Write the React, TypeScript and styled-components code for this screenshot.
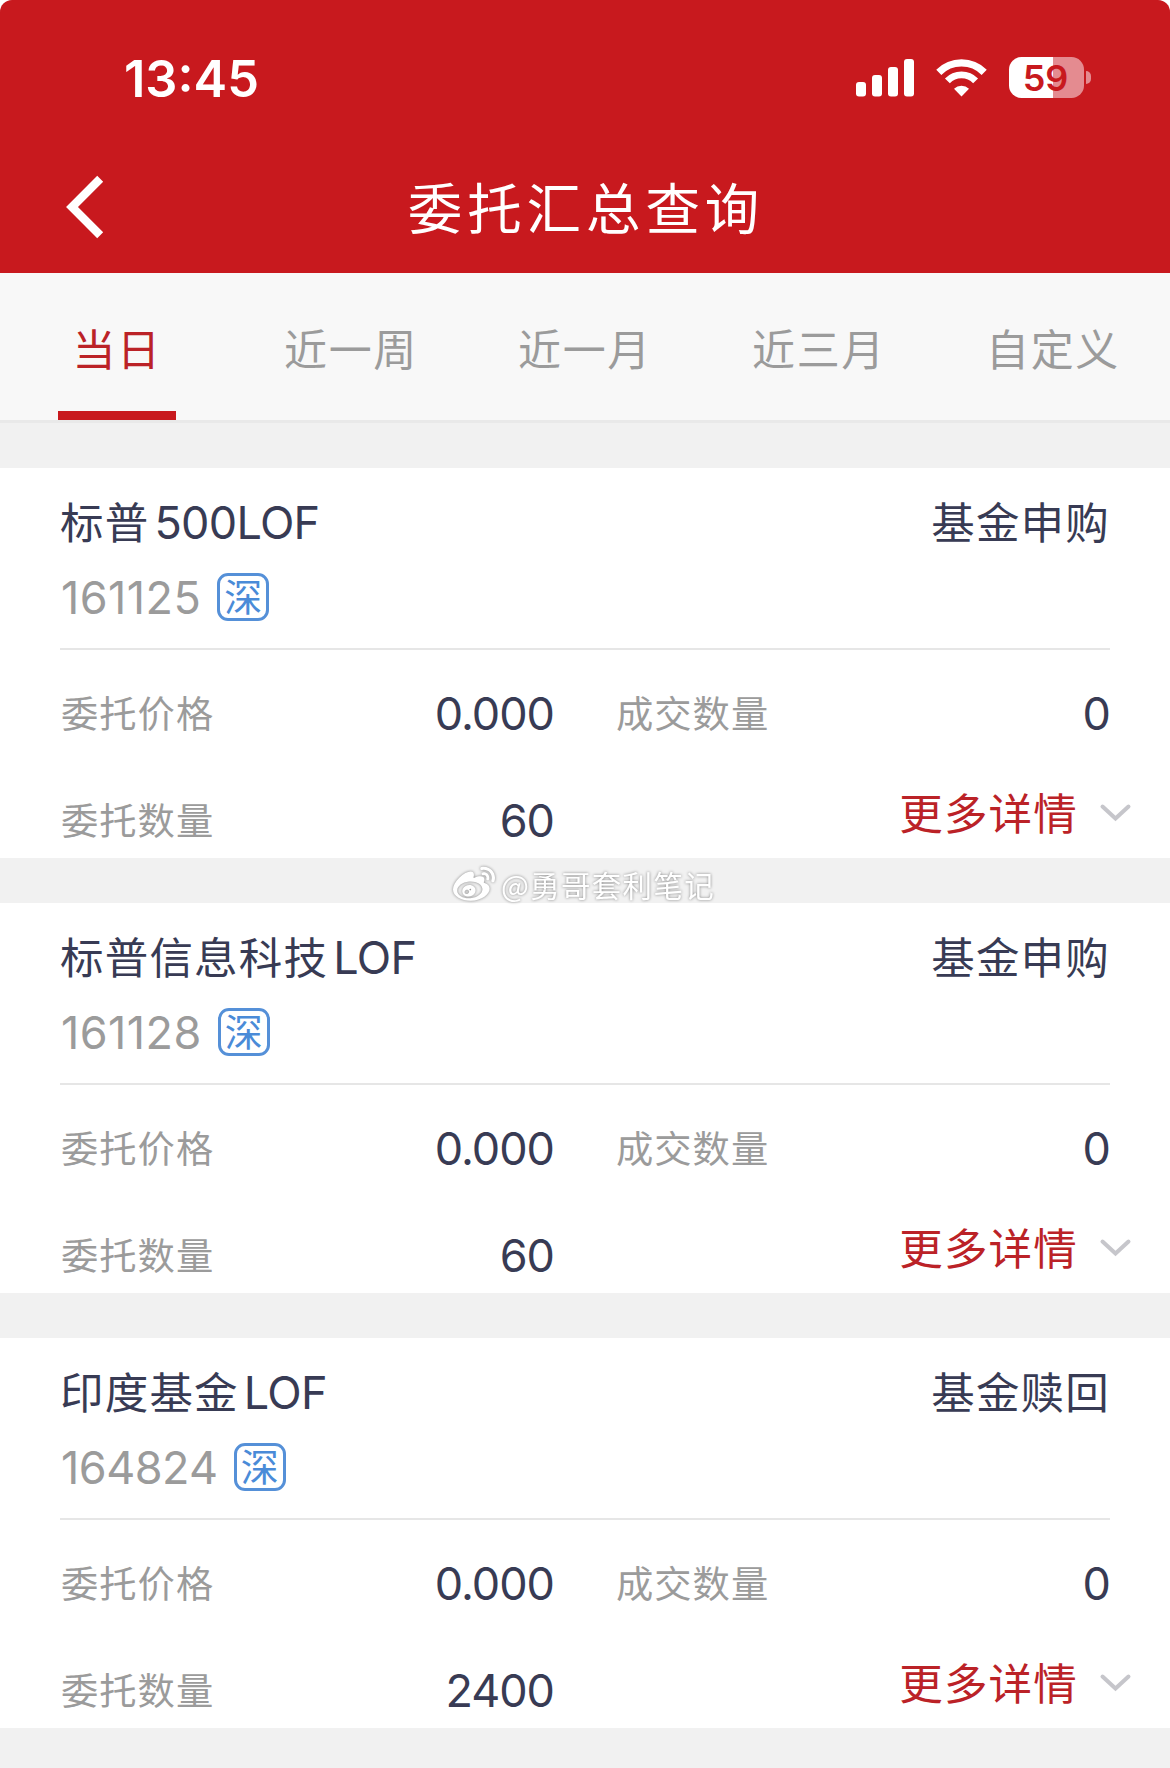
import React from 'react';
import styled, { createGlobalStyle } from 'styled-components';
import { FaWeibo } from 'react-icons/fa';

const RED = '#c8191e';
const INK = '#383b54';
const GREY = '#9b9b9b';

const GlobalStyle = createGlobalStyle`
  * { box-sizing: border-box; }
  body {
    margin: 0;
    background: #fff;
    font-family: Inter, "Noto Sans CJK SC", sans-serif;
  }
`;

const Screen = styled.div`
  position: relative;
  width: 1170px;
  height: 1768px;
  overflow: hidden;
  background: #f1f1f1;
  border-radius: 12px 12px 0 0;
`;

const Header = styled.header`
  height: 273px;
  background: ${RED};
  color: #fff;
`;

const StatusBar = styled.div`
  display: flex;
  align-items: center;
  justify-content: space-between;
  height: 156px;
  padding: 0 79px 0 124px;
`;

const Clock = styled.time`
  padding-top: 1px;
  font-size: 50.5px;
  font-weight: 600;
  line-height: 60px;
`;

const StatusIcons = styled.div`
  display: flex;
  align-items: center;
  gap: 22px;
`;

const Battery = styled.div`
  display: flex;
  align-items: center;
  gap: 2px;
  margin-top: -1px;
`;

const BatteryBody = styled.div`
  width: 75px;
  height: 41px;
  padding-right: 2px;
  border-radius: 12.5px;
  background: linear-gradient(90deg, #fff 44px, #e48b90 44px);
  color: ${RED};
  font-size: 36px;
  font-weight: 600;
  line-height: 42px;
  text-align: center;
`;

const BatteryTip = styled.div`
  width: 5px;
  height: 13px;
  border-radius: 0 6px 6px 0;
  background: #e48b90;
`;

const NavBar = styled.nav`
  display: grid;
  grid-template-columns: 120px 1fr 120px;
  align-items: center;
  height: 102px;
`;

const BackButton = styled.button`
  display: flex;
  padding: 0 0 0 64px;
  border: 0;
  background: none;
`;

const Title = styled.h1`
  margin: 0;
  padding: 4px 0 0 2px;
  font-size: 54.5px;
  font-weight: 400;
  line-height: 80px;
  letter-spacing: 4.9px;
  text-align: center;
`;

const Tabs = styled.div`
  display: grid;
  grid-template-columns: repeat(5, 234px);
  height: 150px;
  background: #f8f8f8;
  border-bottom: 3px solid #e9e9e9;
`;

const Tab = styled.button<{ $active?: boolean }>`
  display: flex;
  flex-direction: column;
  align-items: center;
  justify-content: space-between;
  padding: 47px 0 0;
  border: 0;
  background: none;
  color: ${(p) => (p.$active ? '#bb2227' : GREY)};
  font-family: inherit;
  font-size: 43px;
  line-height: 60px;
  letter-spacing: 1.6px;

  &::after {
    content: '';
    width: 118px;
    height: 9px;
    background: ${(p) => (p.$active ? RED : 'transparent')};
  }
`;

const List = styled.main`
  display: flex;
  flex-direction: column;
  gap: 45px;
  padding-top: 45px;
`;

const Card = styled.article`
  height: 390px;
  padding: 0 60px;
  background: #fff;
`;

const CardHead = styled.div`
  display: flex;
  justify-content: space-between;
  height: 182px;
  padding-top: 25px;
  border-bottom: 2px solid #e6e6e6;
  color: ${INK};
`;

const Cjk = styled.span`
  font-size: 43.5px;
  line-height: 60px;
  letter-spacing: 1.2px;
`;

const Name = styled.div`
  display: flex;
  gap: 5px;
  height: 74px;
  font-size: 45px;
  line-height: 60px;
  letter-spacing: -0.7px;
`;

const Code = styled.div<{ $tracking: number }>`
  display: flex;
  align-items: center;
  gap: 16px;
  height: 60px;
  padding-left: 1px;
  color: ${GREY};
  font-size: 45px;
  font-kerning: none;
  line-height: 61px;
  letter-spacing: ${(p) => p.$tracking}px;
`;

const Market = styled.span`
  display: flex;
  align-items: center;
  justify-content: center;
  width: 52px;
  height: 48px;
  border: 3px solid #5590d8;
  border-radius: 11px;
  color: #4a8bd8;
  font-size: 38px;
  line-height: 42px;
  letter-spacing: 0;
`;

const CardBody = styled.div`
  display: grid;
  grid-template-columns: 494px 1fr;
  column-gap: 61px;
  row-gap: 47px;
  padding-top: 34px;
`;

const Field = styled.div`
  display: flex;
  justify-content: space-between;
  height: 60px;
  line-height: 60px;
`;

const Label = styled.span`
  padding: 1px 0 0 1px;
  color: ${GREY};
  font-size: 37.3px;
  letter-spacing: 1px;
`;

const Value = styled.span`
  color: ${INK};
  font-size: 45px;
  letter-spacing: -1px;
`;

const More = styled.button`
  display: flex;
  align-items: center;
  justify-content: flex-end;
  gap: 21px;
  height: 60px;
  margin: -7px -22px 0 0;
  padding: 0;
  border: 0;
  background: none;
  color: #bb2227;
  font-family: inherit;

  svg {
    margin-bottom: 2px;
  }
`;

const Watermark = styled.div`
  position: absolute;
  top: 861px;
  left: 453px;
  display: flex;
  align-items: center;
  gap: 6px;
  height: 46px;
  color: #fff;
  font-size: 29.5px;
  line-height: 46px;
  letter-spacing: 1.3px;
  font-family: "Noto Sans CJK SC", sans-serif;
  filter: drop-shadow(0 0 1.5px rgba(0, 0, 0, 0.45));

  svg {
    margin-top: 2px;
  }
`;

const Signal = () => (
  <svg width="58" height="38" viewBox="0 0 58 38" fill="#fff">
    <rect x="0" y="23" width="10" height="14.5" rx="3" />
    <rect x="16" y="16" width="10" height="21.5" rx="3" />
    <rect x="32" y="8" width="10" height="29.5" rx="3" />
    <rect x="48" y="0" width="10" height="37.5" rx="3" />
  </svg>
);

const Wifi = () => (
  <svg width="51" height="38" viewBox="0 0 51 38" fill="none">
    <path d="M2.8 13.4 A32 32 0 0 1 48.2 13.4" stroke="#fff" strokeWidth="7.2" />
    <path d="M11.4 21.9 A19.6 19.6 0 0 1 39.6 21.9" stroke="#fff" strokeWidth="6.8" />
    <path d="M25.5 37.6 L18 29.8 A11 11 0 0 1 33 29.8 Z" fill="#fff" />
  </svg>
);

const BackIcon = () => (
  <svg width="42" height="64" viewBox="0 0 42 64" fill="none">
    <path d="M36.2 3.8 L8 32 L36.2 60.2" stroke="#fff" strokeWidth="8.4" />
  </svg>
);

const ChevronDown = () => (
  <svg width="33" height="20" viewBox="0 0 33 20" fill="none">
    <path d="M3.5 3.5 L16.5 15.5 L29.5 3.5" stroke="#c6c6cb" strokeWidth="4" strokeLinecap="round" />
  </svg>
);

interface Order {
  name: string;
  suffix: string;
  code: string;
  tracking: number;
  kind: string;
  price: string;
  filled: string;
  amount: string;
}

const orders: Order[] = [
  { name: '标普', suffix: '500LOF', code: '161125', tracking: 0.45, kind: '基金申购', price: '0.000', filled: '0', amount: '60' },
  { name: '标普信息科技', suffix: 'LOF', code: '161128', tracking: 0.45, kind: '基金申购', price: '0.000', filled: '0', amount: '60' },
  { name: '印度基金', suffix: 'LOF', code: '164824', tracking: -0.5, kind: '基金赎回', price: '0.000', filled: '0', amount: '2400' },
];

const tabs = ['当日', '近一周', '近一月', '近三月', '自定义'];

const OrderCard = ({ order }: { order: Order }) => (
  <Card>
    <CardHead>
      <div>
        <Name>
          <Cjk>{order.name}</Cjk>
          <span>{order.suffix}</span>
        </Name>
        <Code $tracking={order.tracking}>
          {order.code}
          <Market>深</Market>
        </Code>
      </div>
      <Cjk>{order.kind}</Cjk>
    </CardHead>
    <CardBody>
      <Field>
        <Label>委托价格</Label>
        <Value>{order.price}</Value>
      </Field>
      <Field>
        <Label>成交数量</Label>
        <Value>{order.filled}</Value>
      </Field>
      <Field>
        <Label>委托数量</Label>
        <Value>{order.amount}</Value>
      </Field>
      <More>
        <Cjk>更多详情</Cjk>
        <ChevronDown />
      </More>
    </CardBody>
  </Card>
);

export default function App() {
  return (
    <Screen>
      <GlobalStyle />
      <Header>
        <StatusBar>
          <Clock>13:45</Clock>
          <StatusIcons>
            <Signal />
            <Wifi />
            <Battery>
              <BatteryBody>59</BatteryBody>
              <BatteryTip />
            </Battery>
          </StatusIcons>
        </StatusBar>
        <NavBar>
          <BackButton aria-label="返回">
            <BackIcon />
          </BackButton>
          <Title>委托汇总查询</Title>
        </NavBar>
      </Header>
      <Tabs>
        {tabs.map((tab, i) => (
          <Tab key={tab} $active={i === 0}>
            {tab}
          </Tab>
        ))}
      </Tabs>
      <List>
        {orders.map((order) => (
          <OrderCard key={order.code} order={order} />
        ))}
      </List>
      <Watermark>
        <FaWeibo size={42} />
        <span>@勇哥套利笔记</span>
      </Watermark>
    </Screen>
  );
}
